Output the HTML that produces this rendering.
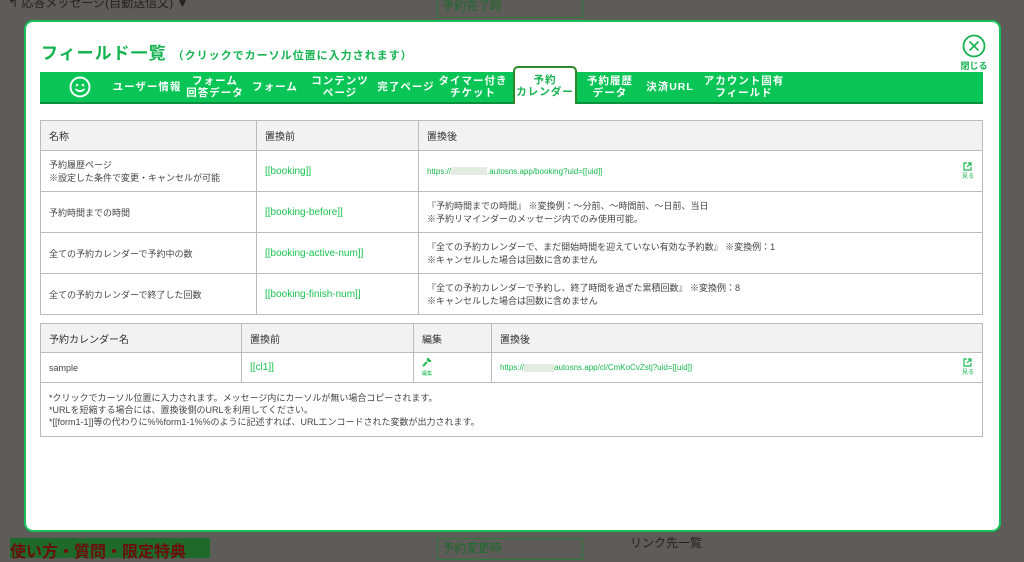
<!DOCTYPE html><html style="background:#5e5c59"><head><meta charset="utf-8"><style>
*{box-sizing:border-box;margin:0;padding:0}
body{width:1024px;height:558px;background:#5e5c59;font-family:"Liberation Sans","Noto Sans CJK JP",sans-serif;position:relative;overflow:hidden}
.bg{position:absolute;color:#222;font-size:12px}
.modal{position:absolute;left:24px;top:20px;width:977px;height:512px;background:#fff;border:2px solid #15c25a;border-radius:9px}
.title{position:absolute;left:15px;top:17px;font-size:17px;font-weight:bold;color:#14b350;letter-spacing:1px}
.title small{font-size:11px;letter-spacing:1px;margin-left:6px}
.close{position:absolute;right:10px;top:12px;width:30px;text-align:center;font-size:9px;color:#14b350;font-weight:bold;white-space:nowrap}
.tabs{position:absolute;left:14px;top:50px;width:943px;height:32px;background:#08c556;border-bottom:2px solid #0a8f3c}
.tab{position:absolute;top:0;height:30px;color:#fff;font-size:10.5px;font-weight:bold;text-align:center;line-height:12px;display:flex;align-items:center;justify-content:center;letter-spacing:1px;white-space:nowrap}
.act{top:-6px;height:38px;background:#fff;color:#14b350;border:2px solid #2a8a2a;border-bottom:none;border-radius:5px 5px 0 0}
table{position:absolute;border-collapse:collapse;font-size:9px;color:#444}
td,th{border:1px solid #bbb;padding:0 8px;text-align:left;font-weight:normal}
th{background:#f2f2f2;color:#333;font-size:10px}
.g{color:#17c24f;font-size:10px}
.u{color:#17b84c;font-size:8px}
.fx{display:flex;justify-content:space-between;align-items:center}
.mini{font-size:6px;color:#17b84c;text-align:center;line-height:7px}
.blur{display:inline-block;width:36px;height:8px;background:#e3ebe3;vertical-align:middle}
</style></head><body>
<div class="bg" style="left:8px;top:-6px">↰ 応答メッセージ(自動送信文) ▼</div>
<div class="bg" style="left:437px;top:-4px;width:146px;height:22px;border:1px solid #2c7a3a;color:#1c6a2a;padding-left:4px">予約完了時</div>
<div class="bg" style="left:437px;top:538px;width:146px;height:22px;border:1px solid #2c7a3a;color:#1c6a2a;padding-left:4px">予約変更時</div>
<div class="bg" style="left:10px;top:538px;width:200px;height:20px;background:#1f6a2a;color:#6a0e0e;font-weight:bold;font-size:16px">使い方・質問・限定特典</div>
<div class="bg" style="left:630px;top:534px">リンク先一覧</div>
<div class="modal">
<div class="title">フィールド一覧<small>（クリックでカーソル位置に入力されます）</small></div>
<div class="close"><svg width="24" height="24" viewBox="0 0 24 24" style="display:block;margin:0 auto 1px"><circle cx="12" cy="12" r="10.5" fill="none" stroke="#14b350" stroke-width="1.8"/><path d="M7.5 7.5L16.5 16.5M16.5 7.5L7.5 16.5" stroke="#14b350" stroke-width="1.6"/></svg>閉じる</div>
<div class="tabs">
<div class="tab" style="left:16px;width:48px"><svg width="22" height="22" viewBox="0 0 22 22"><circle cx="11" cy="11" r="9.5" fill="none" stroke="#fff" stroke-width="2"/><circle cx="8" cy="9" r="1.3" fill="#fff"/><circle cx="14" cy="9" r="1.3" fill="#fff"/><path d="M6.5 13Q11 17.5 15.5 13" fill="none" stroke="#fff" stroke-width="1.8"/></svg></div>
<div class="tab" style="left:72px;width:70px">ユーザー情報</div>
<div class="tab" style="left:145px;width:60px">フォーム<br>回答データ</div>
<div class="tab" style="left:210px;width:50px">フォーム</div>
<div class="tab" style="left:268px;width:64px">コンテンツ<br>ページ</div>
<div class="tab" style="left:336px;width:60px">完了ページ</div>
<div class="tab" style="left:400px;width:66px">タイマー付き<br>チケット</div>
<div class="tab act" style="left:473px;width:64px">予約<br>カレンダー</div>
<div class="tab" style="left:542px;width:56px">予約履歴<br>データ</div>
<div class="tab" style="left:603px;width:54px">決済URL</div>
<div class="tab" style="left:662px;width:84px">アカウント固有<br>フィールド</div>
</div>
</div>
<table style="left:40px;top:120px;width:943px">
<tr style="height:30px"><th style="width:216px">名称</th><th style="width:162px">置換前</th><th>置換後</th></tr>
<tr style="height:41px"><td>予約履歴ページ<br>※設定した条件で変更・キャンセルが可能</td><td class="g">[[booking]]</td><td><div class="fx"><span class="u">https://<span class="blur"></span>.autosns.app/booking?uid=[[uid]]</span><span class="mini"><svg width="9" height="9" viewBox="0 0 9 9"><path d="M4 1H1V8H8V5M5 1H8V4M8 1L4 5" fill="none" stroke="#17b84c" stroke-width="1.2"/></svg><br>見る</span></div></td></tr>
<tr style="height:41px"><td>予約時間までの時間</td><td class="g">[[booking-before]]</td><td>『予約時間までの時間』 ※変換例：〜分前、〜時間前、〜日前、当日<br>※予約リマインダーのメッセージ内でのみ使用可能。</td></tr>
<tr style="height:41px"><td>全ての予約カレンダーで予約中の数</td><td class="g">[[booking-active-num]]</td><td>『全ての予約カレンダーで、まだ開始時間を迎えていない有効な予約数』 ※変換例：1<br>※キャンセルした場合は回数に含めません</td></tr>
<tr style="height:41px"><td>全ての予約カレンダーで終了した回数</td><td class="g">[[booking-finish-num]]</td><td>『全ての予約カレンダーで予約し、終了時間を過ぎた累積回数』 ※変換例：8<br>※キャンセルした場合は回数に含めません</td></tr>
</table>
<table style="left:40px;top:323px;width:943px">
<tr style="height:29px"><th style="width:201px">予約カレンダー名</th><th style="width:172px">置換前</th><th style="width:78px">編集</th><th>置換後</th></tr>
<tr style="height:30px"><td>sample</td><td class="g">[[cl1]]</td><td style="color:#17b84c;line-height:8px"><svg width="10" height="10" viewBox="0 0 10 10"><path d="M1 9L5 5M6 1A3 3 0 0 0 9 4L7 4L6 3Z" fill="#17b84c" stroke="#17b84c" stroke-width="2"/></svg><br><span style="font-size:5px">編集</span></td><td><div class="fx"><span class="u">https://<span class="blur" style="width:30px"></span>autosns.app/cl/CmKoCvZstj?uid=[[uid]]</span><span class="mini"><svg width="9" height="9" viewBox="0 0 9 9"><path d="M4 1H1V8H8V5M5 1H8V4M8 1L4 5" fill="none" stroke="#17b84c" stroke-width="1.2"/></svg><br>見る</span></div></td></tr>
<tr style="height:54px"><td colspan="4" style="line-height:12px">*クリックでカーソル位置に入力されます。メッセージ内にカーソルが無い場合コピーされます。<br>*URLを短縮する場合には、置換後側のURLを利用してください。<br>*[[form1-1]]等の代わりに%%form1-1%%のように記述すれば、URLエンコードされた変数が出力されます。</td></tr>
</table>
</body></html>
